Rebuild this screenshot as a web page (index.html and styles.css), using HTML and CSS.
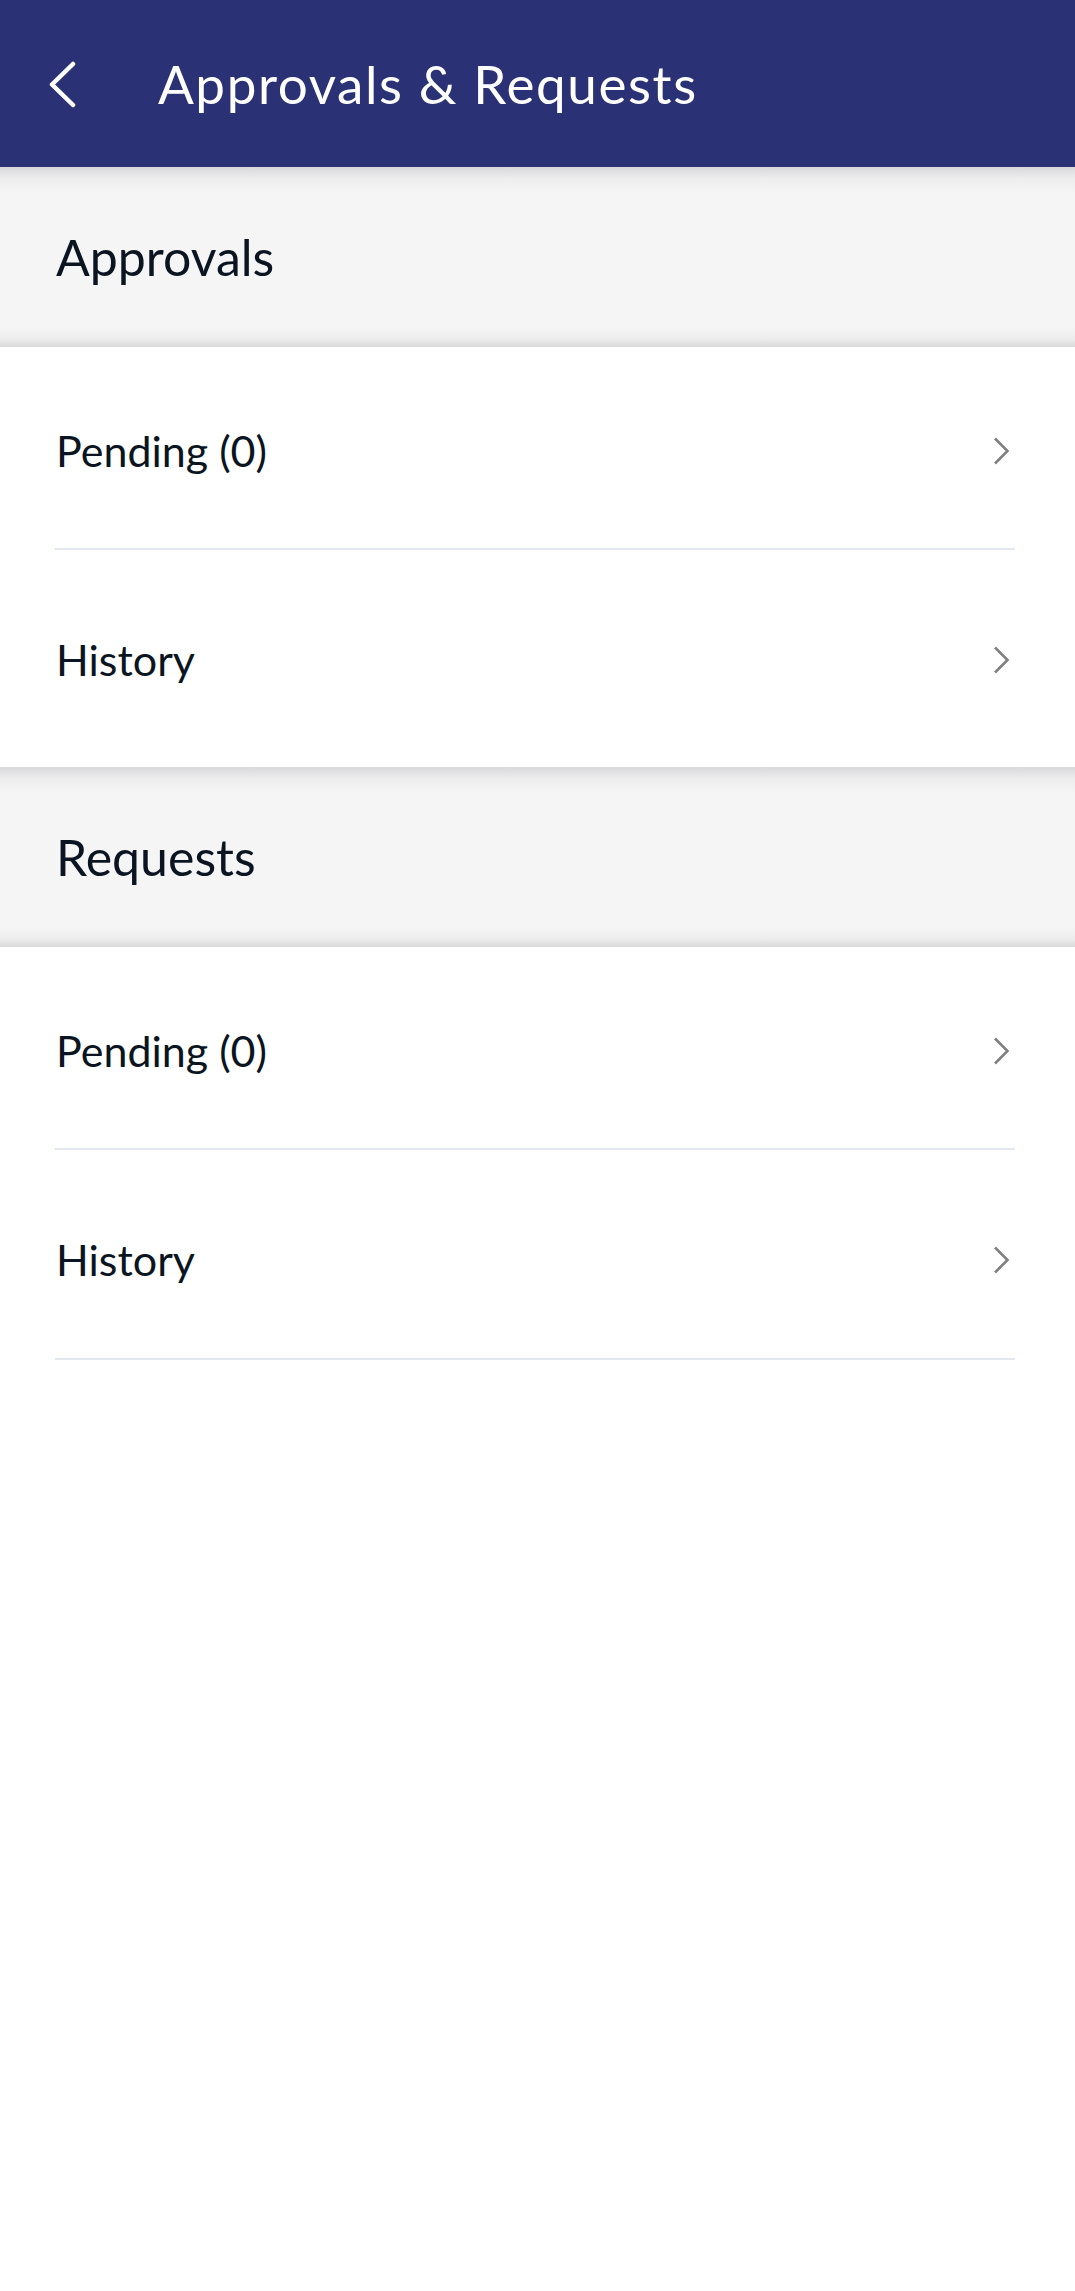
FILE: index.html
```html
<!DOCTYPE html>
<html lang="en">
<head>
<meta charset="utf-8">
<title>Approvals &amp; Requests</title>
<link rel="stylesheet" href="styles.css">
</head>
<body>
<header class="appbar">
  <svg class="back" width="30" height="48" viewBox="0 0 30 48" aria-hidden="true">
    <polyline points="25,4 4,24.5 25,45" fill="none" stroke="#ffffff" stroke-width="4.5" stroke-linecap="round" stroke-linejoin="round"/>
  </svg>
  <h1 class="title">Approvals &amp; Requests</h1>
</header>

<section class="group">
  <div class="group-head"><h2 class="group-title">Approvals</h2></div>
  <div class="list list-first">
    <div class="row row-a">
      <span class="label">Pending (0)</span>
      <svg class="chev" width="18" height="30" viewBox="0 0 18 30" aria-hidden="true"><polyline points="3,2.5 15.5,15 3,27.5" fill="none" stroke="#808080" stroke-width="2.6"/></svg>
    </div>
    <div class="row row-b no-line">
      <span class="label">History</span>
      <svg class="chev" width="18" height="30" viewBox="0 0 18 30" aria-hidden="true"><polyline points="3,2.5 15.5,15 3,27.5" fill="none" stroke="#808080" stroke-width="2.6"/></svg>
    </div>
  </div>
</section>

<section class="group">
  <div class="group-head"><h2 class="group-title">Requests</h2></div>
  <div class="list">
    <div class="row row-a">
      <span class="label">Pending (0)</span>
      <svg class="chev" width="18" height="30" viewBox="0 0 18 30" aria-hidden="true"><polyline points="3,2.5 15.5,15 3,27.5" fill="none" stroke="#808080" stroke-width="2.6"/></svg>
    </div>
    <div class="row row-b">
      <span class="label">History</span>
      <svg class="chev" width="18" height="30" viewBox="0 0 18 30" aria-hidden="true"><polyline points="3,2.5 15.5,15 3,27.5" fill="none" stroke="#808080" stroke-width="2.6"/></svg>
    </div>
  </div>
</section>
</body>
</html>
```

FILE: styles.css
```css
* { box-sizing: border-box; }

html, body {
  margin: 0;
  padding: 0;
  background: #ffffff;
}

body {
  font-family: Lato, "Open Sans", "Noto Sans", sans-serif;
  color: #0b1522;
  min-height: 2291px;
}

.appbar {
  height: 167px;
  background: #2a3275;
  display: flex;
  align-items: center;
  padding-left: 48px;
}

.back {
  display: block;
  flex: none;
}

.title {
  margin: 0 0 0 80px;
  font-size: 53px;
  font-weight: 400;
  line-height: 1.2;
  letter-spacing: 1.6px;
  color: #ffffff;
}

.group-head {
  height: 180px;
  display: flex;
  align-items: center;
  padding: 0 56px 1px;
  background: linear-gradient(to bottom,
    #d9d9dc 0px,
    #eeeeef 12px,
    #f5f5f5 26px,
    #f5f5f5 calc(100% - 20px),
    #ececec calc(100% - 8px),
    #d9d9d9 100%);
}

.group-title {
  margin: 0;
  font-size: 50px;
  font-weight: 400;
  line-height: 1.2;
}

.list {
  padding: 0 60px 0 55px;
}

.list-first {
  padding-bottom: 9px;
}

.row {
  display: flex;
  align-items: center;
  justify-content: space-between;
  padding-right: 5px;
  border-bottom: 2px solid #e3e7ee;
}

.row-a {
  height: 203px;
  padding-top: 6px;
}

.row-b {
  height: 210px;
  padding-top: 11px;
}

.row.no-line {
  border-bottom: none;
  height: 208px;
}

.label {
  font-size: 43px;
  line-height: 1.2;
  padding-left: 1px;
}

.chev {
  display: block;
  flex: none;
}
```
